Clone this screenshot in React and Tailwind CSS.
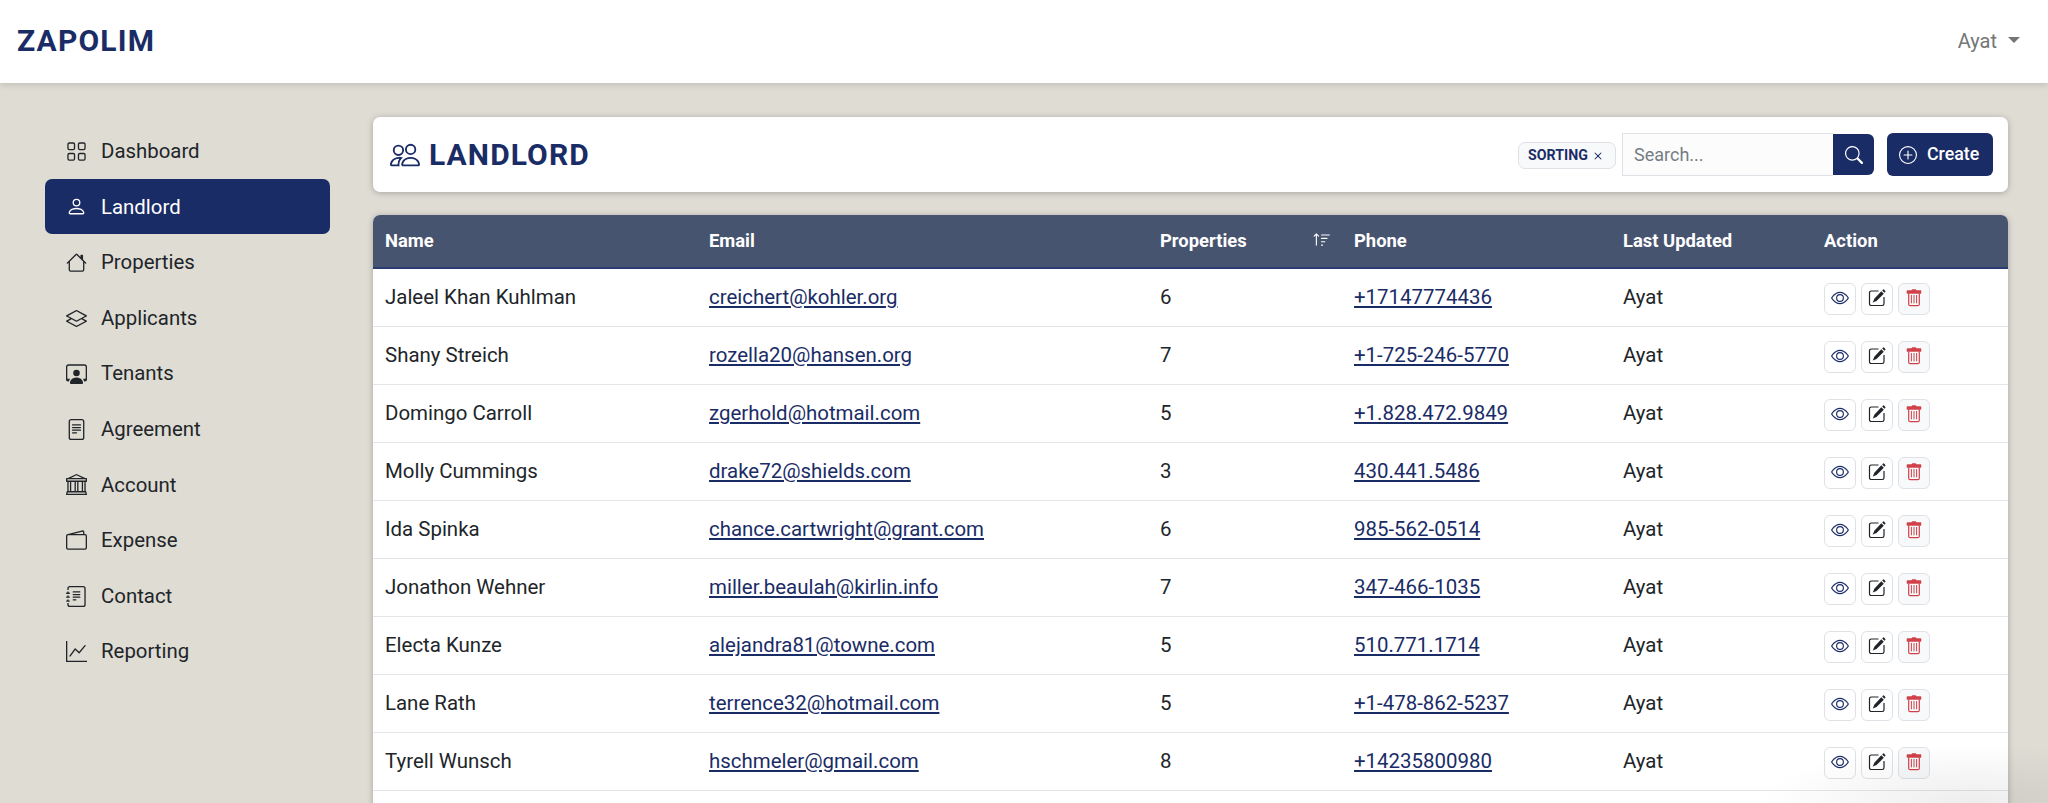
import React, { useState } from "react";
import {
  BsGrid,
  BsPerson,
  BsHouse,
  BsLayers,
  BsPersonWorkspace,
  BsFileText,
  BsBank,
  BsWallet2,
  BsJournalText,
  BsGraphUp,
  BsPeople,
  BsSortUp,
  BsSearch,
  BsPlusCircle,
  BsEye,
  BsX,
} from "react-icons/bs";

const menu = [
  { label: "Dashboard", icon: BsGrid },
  { label: "Landlord", icon: BsPerson },
  { label: "Properties", icon: BsHouse },
  { label: "Applicants", icon: BsLayers },
  { label: "Tenants", icon: BsPersonWorkspace },
  { label: "Agreement", icon: BsFileText },
  { label: "Account", icon: BsBank },
  { label: "Expense", icon: BsWallet2 },
  { label: "Contact", icon: BsJournalText },
  { label: "Reporting", icon: BsGraphUp },
];

const landlords = [
  { name: "Jaleel Khan Kuhlman", email: "creichert@kohler.org", properties: 6, phone: "+17147774436" },
  { name: "Shany Streich", email: "rozella20@hansen.org", properties: 7, phone: "+1-725-246-5770" },
  { name: "Domingo Carroll", email: "zgerhold@hotmail.com", properties: 5, phone: "+1.828.472.9849" },
  { name: "Molly Cummings", email: "drake72@shields.com", properties: 3, phone: "430.441.5486" },
  { name: "Ida Spinka", email: "chance.cartwright@grant.com", properties: 6, phone: "985-562-0514" },
  { name: "Jonathon Wehner", email: "miller.beaulah@kirlin.info", properties: 7, phone: "347-466-1035" },
  { name: "Electa Kunze", email: "alejandra81@towne.com", properties: 5, phone: "510.771.1714" },
  { name: "Lane Rath", email: "terrence32@hotmail.com", properties: 5, phone: "+1-478-862-5237" },
  { name: "Tyrell Wunsch", email: "hschmeler@gmail.com", properties: 8, phone: "+14235800980" },
];

const EditIcon = () => (
  <svg viewBox="0 0 18 18" className="h-[18px] w-[18px]" fill="none">
    <path d="M10.5 2H3.2A1.7 1.7 0 0 0 1.5 3.7v11.1a1.7 1.7 0 0 0 1.7 1.7h11.1a1.7 1.7 0 0 0 1.7-1.7V8" stroke="currentColor" strokeWidth="1.2" />
    <path d="M13.3 2.2l2.5 2.5L8.5 12.1l-3.7 1.5 1.5-3.8zM14.2 1.5l.9-.9a.6.6 0 0 1 .9 0l1.3 1.3a.6.6 0 0 1 0 .9l-.9.9z" fill="currentColor" />
  </svg>
);

const TrashIcon = () => (
  <svg viewBox="0 0 16 18" className="h-[18px] w-4" fill="none">
    <path d="M2.7 4.5v10.7c0 .9.6 1.5 1.5 1.5h7.6c.9 0 1.5-.6 1.5-1.5V4.5" stroke="currentColor" strokeWidth="1.2" />
    <path d="M5.4 6v8.3M8 6v8.3M10.6 6v8.3" stroke="currentColor" strokeWidth="1" />
    <path d="M1.6 1.2h3.9L6.3.2h3.4l.8 1h3.9c.5 0 .9.4.9.9v1.8c0 .5-.4.9-.9.9H1.6a.9.9 0 0 1-.9-.9V2.1c0-.5.4-.9.9-.9z" fill="currentColor" />
  </svg>
);

function Navbar() {
  return (
    <nav className="relative flex h-[83px] shrink-0 items-center justify-between bg-white pr-[28px] pb-[3px] pl-[17px] shadow-[0_2px_6px_rgba(0,0,0,0.13)]">
      <a href="#" className="text-[30px] font-bold tracking-[1.2px] text-[#1a2c66]">ZAPOLIM</a>
      <button className="flex items-center gap-[11px] pt-px text-[20px] text-[#757575]">
        Ayat
        <span className="mb-0.5 h-0 w-0 border-x-[6px] border-t-[6px] border-x-transparent border-t-[#757575]" />
      </button>
    </nav>
  );
}

function Sidebar({ active, onSelect }) {
  return (
    <aside className="w-[373px] shrink-0 pt-10 pr-[43px] pl-[45px]">
      <ul>
        {menu.map(({ label, icon: Icon }) => (
          <li key={label}>
            <button
              onClick={() => onSelect(label)}
              className={`flex h-[55.6px] w-full items-center gap-[14px] rounded-[7px] pt-px pl-[21px] text-[20.4px] ${
                active === label ? "bg-[#1a2c66] text-white" : "text-[#212529]"
              }`}
            >
              <Icon className="h-[21px] w-[21px]" />
              {label}
            </button>
          </li>
        ))}
      </ul>
    </aside>
  );
}

function Toolbar() {
  const [keyword, setKeyword] = useState("");
  const [sorting, setSorting] = useState(true);

  return (
    <div className="flex h-[75px] items-center justify-between rounded-[7px] bg-white pr-[15px] pl-[17px] shadow-[0_1px_6px_rgba(0,0,0,0.25)]">
      <h1 className="flex items-center gap-[9px] text-[30px] font-bold tracking-[1.1px] text-[#1a2c66]">
        <BsPeople className="h-[30px] w-[30px]" />
        LANDLORD
      </h1>
      <div className="flex items-center">
        {sorting && (
          <button
            onClick={() => setSorting(false)}
            className="mt-0.5 mr-[6px] flex h-[27px] w-[98px] items-center gap-0.5 rounded-[7px] border border-[#dee2e6] bg-[#f8f9fa] pl-[9px] text-[14.2px] font-bold text-[#1a2c66]"
          >
            SORTING
            <BsX className="h-4 w-4" />
          </button>
        )}
        <div className="flex h-[43px] items-center border border-r-0 border-[#dee2e6] bg-[#fcfcfc]">
          <input
            value={keyword}
            onChange={e => setKeyword(e.target.value)}
            placeholder="Search..."
            className="w-[210px] pl-[11px] text-[18px] text-[#212529] outline-none placeholder:text-[#757c83]"
          />
        </div>
        <button className="flex h-[41px] w-[41px] items-center justify-center rounded-r-[6px] bg-[#1a2c66] text-white">
          <BsSearch className="h-[18px] w-[18px]" />
        </button>
        <button className="ml-[13px] flex h-[43px] w-[106px] items-center gap-[10px] rounded-[6px] bg-[#1a2c66] pl-3 text-[17.8px] font-medium text-white">
          <BsPlusCircle className="h-[18px] w-[18px]" />
          Create
        </button>
      </div>
    </div>
  );
}

function LandlordTable({ rows }) {
  return (
    <div className="mt-[23px] overflow-hidden rounded-t-[7px] bg-white shadow-[0_1px_6px_rgba(0,0,0,0.25)]">
      <table className="w-full table-fixed border-separate border-spacing-0 text-left text-[20.45px] text-[#212529]">
        <thead className="bg-[#47546f] text-[18.4px] text-white [&_th]:border-b-2 [&_th]:border-[#2a3c73]">
          <tr className="h-[54px]">
            <th className="w-[324px] pl-3">Name</th>
            <th className="w-[451px] pl-3">Email</th>
            <th className="w-[194px] pr-[11px] pl-3">
              <span className="flex items-center justify-between">
                Properties
                <BsSortUp className="mb-0.5 h-[18px] w-[18px]" />
              </span>
            </th>
            <th className="w-[269px] pl-3">Phone</th>
            <th className="w-[201px] pl-3">Last Updated</th>
            <th className="pl-3">Action</th>
          </tr>
        </thead>
        <tbody className="[&_td]:border-b [&_td]:border-[#e3e5e8]">
          {rows.map(row => (
            <tr key={row.email} className="h-[58px]">
              <td className="pl-3">{row.name}</td>
              <td className="pl-3">
                <a href="#" className="text-[#1a2c66] underline">{row.email}</a>
              </td>
              <td className="pl-3">{row.properties}</td>
              <td className="pl-3">
                <a href="#" className="text-[#1a2c66] underline">{row.phone}</a>
              </td>
              <td className="pl-3">Ayat</td>
              <td className="pt-0.5 pl-3">
                <div className="flex gap-[5px]">
                  <button className="flex h-8 w-8 items-center justify-center rounded-[6px] border border-[#dee2e6] pb-0.5 text-[#1a2c66]">
                    <BsEye className="h-[18px] w-[18px]" />
                  </button>
                  <button className="flex h-8 w-8 items-center justify-center rounded-[6px] border border-[#dee2e6] pb-0.5">
                    <EditIcon />
                  </button>
                  <button className="flex h-8 w-8 items-center justify-center rounded-[6px] border border-[#dee2e6] bg-[#f8f9fa] pb-0.5 text-[#d0414a]">
                    <TrashIcon />
                  </button>
                </div>
              </td>
            </tr>
          ))}
          <tr className="h-[58px]">
            <td colSpan={6} />
          </tr>
        </tbody>
      </table>
    </div>
  );
}

export default function App() {
  const [active, setActive] = useState("Landlord");

  return (
    <div className="relative flex h-[803px] flex-col overflow-hidden bg-[#dfdcd4] font-[Roboto,sans-serif]">
      <Navbar />
      <div className="flex min-h-0 flex-1">
        <Sidebar active={active} onSelect={setActive} />
        <main className="min-w-0 flex-1 pt-[34px] pr-10">
          <Toolbar />
          <LandlordTable rows={landlords} />
        </main>
      </div>
      {/* soft shade in the bottom right corner */}
      <div className="pointer-events-none absolute right-0 bottom-0 h-[60px] w-[290px] bg-[radial-gradient(ellipse_at_75%_100%,rgba(0,0,0,0.07),transparent_70%)]" />
    </div>
  );
}
